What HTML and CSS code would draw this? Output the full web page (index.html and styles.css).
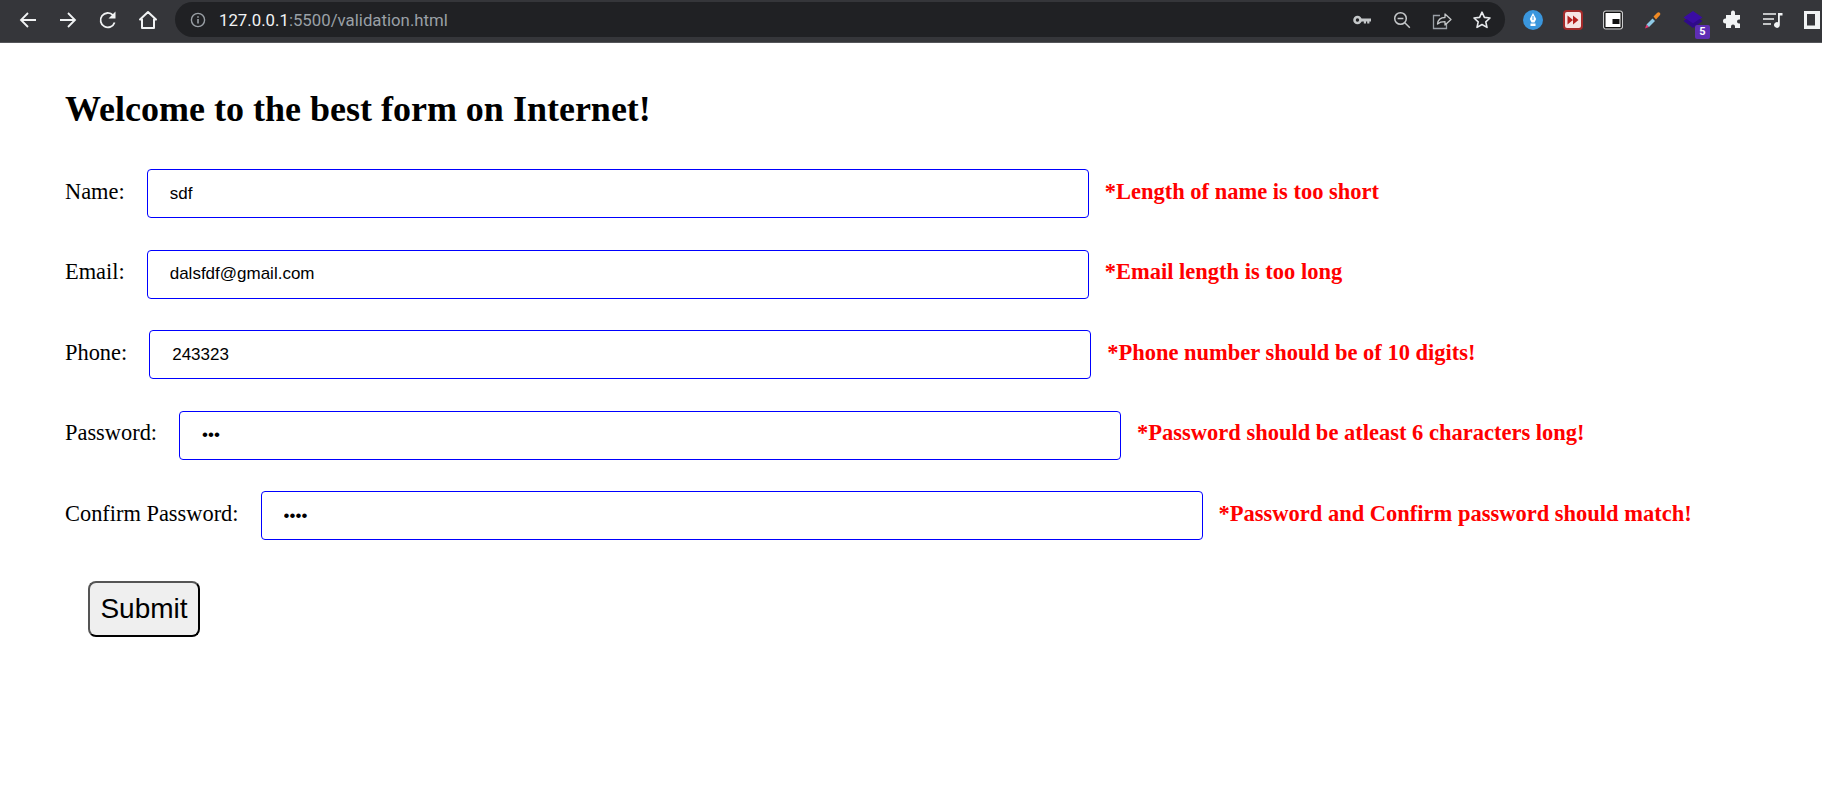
FILE: index.html
```html
<!DOCTYPE html>
<html lang="en">
<head>
  <meta charset="UTF-8">
  <title>Form Validation</title>
  <meta name="viewport" content="width=device-width, initial-scale=1">
  <link rel="stylesheet" href="styles.css">
</head>
<body>
  <div class="toolbar">
    <div class="nav-icons">
      <svg class="icon" viewBox="0 0 24 24"><path d="M20 12H5M12 5l-7 7 7 7" fill="none" stroke="#f1f3f4" stroke-width="1.8"/></svg>
      <svg class="icon" viewBox="0 0 24 24"><path d="M4 12h15M12 5l7 7-7 7" fill="none" stroke="#f1f3f4" stroke-width="1.8"/></svg>
      <svg class="icon" viewBox="0 0 24 24"><path d="M18.600 14.500A7.200 7.200 0 1 1 17 7.200" fill="none" stroke="#f1f3f4" stroke-width="1.800"/><path d="M19.500 3.500v7h-7z" fill="#f1f3f4"/></svg>
      <svg class="icon" viewBox="0 0 24 24"><path d="M12 4l8 7.500h-2V20H6v-8.500H4z" fill="none" stroke="#f1f3f4" stroke-width="2" stroke-linejoin="round"/></svg>
    </div>
    <div class="omnibox">
      <svg class="info-icon" viewBox="0 0 16 16"><circle cx="8" cy="8" r="6.600" fill="none" stroke="#9aa0a6" stroke-width="1.400"/><path d="M7.200 7h1.600v4.600H7.200zM7.200 4.200h1.600v1.600H7.200z" fill="#9aa0a6"/></svg>
      <span class="url"><span class="host">127.0.0.1</span>:5500/validation.html</span>
      <div class="omni-actions">
        <svg class="omni-icon" viewBox="0 0 20 20"><circle cx="5.500" cy="10" r="3" fill="none" stroke="#c4c7c9" stroke-width="2.600"/><path d="M8 8.600h11v2.800h-1.600v2h-2.200v-2h-1.200v2h-2.200v-2H8z" fill="#c4c7c9"/></svg>
        <svg class="omni-icon" viewBox="0 0 20 20"><circle cx="8.500" cy="8.500" r="5.800" fill="none" stroke="#c4c7c9" stroke-width="1.500"/><path d="M5.600 8.500h5.800M12.800 12.800l5 5" stroke="#c4c7c9" stroke-width="1.500"/></svg>
        <svg class="omni-icon" viewBox="0 0 20 20"><path d="M8 5.500H1.500v13h13V13" fill="none" stroke="#9aa0a6" stroke-width="1.300"/><path d="M5.500 14c.5-4.500 3.500-6.500 7.500-6.500V4l6 5.500-6 5.500v-3.300c-3.300 0-5.500.5-7.500 2.300z" fill="none" stroke="#c4c7c9" stroke-width="1.300" stroke-linejoin="round"/></svg>
        <svg class="omni-icon" viewBox="0 0 20 20"><path d="M10 2.200l2.400 5.200 5.600.6-4.200 3.800 1.200 5.600-5-2.900-5 2.900 1.200-5.600L2 8l5.600-.6z" fill="none" stroke="#e8eaed" stroke-width="1.600" stroke-linejoin="round"/></svg>
      </div>
    </div>
    <div class="extensions">
      <svg class="ext-icon" viewBox="0 0 20 20"><circle cx="10" cy="10" r="10" fill="#3a96dd"/><path d="M10 3l3.200 6-1.700 3.500h-3L6.800 9z" fill="#fff"/><rect x="7.500" y="13.500" width="5" height="2.500" fill="#fff"/><path d="M10 6v4" stroke="#3a96dd" stroke-width="1"/></svg>
      <svg class="ext-icon" viewBox="0 0 20 20"><rect x="1" y="1" width="18" height="18" rx="3" fill="#f6e4e4" stroke="#a32a2a" stroke-width="2"/><path d="M4.500 5.500l5.500 4.500-5.500 4.500zM10 5.500l5.500 4.500-5.500 4.500z" fill="#b3201f"/></svg>
      <svg class="ext-icon" viewBox="0 0 20 20"><rect x="0.500" y="1" width="19" height="18" rx="2" fill="#fff" stroke="#c9cacb" stroke-width="1"/><rect x="1.800" y="2.300" width="16.400" height="15.400" rx="1" fill="#fff" stroke="#111" stroke-width="1.400"/><rect x="9.500" y="9" width="7" height="5" fill="#111"/></svg>
      <svg class="ext-icon" viewBox="0 0 20 20"><path d="M2 18.500l1.500-4 2.500 2.500z" fill="#e8386f"/><path d="M3.500 14.500l6-6 2.500 2.500-6 6z" fill="#8ecae6"/><path d="M10.500 6.500l3.500-3.500c1-1 2-1 2.800-.2s.8 1.800-.2 2.800L13 9.500z" fill="#f08a24"/></svg>
      <div class="ext-badge-wrap">
        <svg class="ext-icon" viewBox="0 0 20 20"><path d="M10 1l9.500 6.500-9.500 6.500-9.500-6.500z" fill="#3a0ca3"/><path d="M.5 11l9.500 7 9.500-7-3-2-6.500 4.500-6.500-4.500z" fill="#2f0a8a"/></svg>
        <span class="ext-badge">5</span>
      </div>
      <svg class="ext-icon" viewBox="0 0 20 20"><path d="M8 2.500a2 2 0 0 1 4 0V5h5v4.500h-1a2 2 0 0 0 0 4h1V18h-5v-1.500a2 2 0 0 0-4 0V18H3v-4.500h-.5a2.500 2.500 0 0 1 0-5H3V5h5z" fill="#f1f3f4"/></svg>
      <svg class="ext-icon" viewBox="0 0 20 20"><path d="M0 4h13M0 9h11M0 14h8" stroke="#f1f3f4" stroke-width="1.600"/><path d="M15 3h4.500v2.500h-2.700V15a2.900 2.900 0 1 1-1.800-2.700z" fill="#f1f3f4"/></svg>
      <svg class="ext-icon" viewBox="0 0 20 20"><path d="M1 1h16v18H1zM4 4v11.500h8V4z" fill="#f1f3f4" fill-rule="evenodd"/></svg>
    </div>
  </div>

  <div class="page">
    <h1 class="title">Welcome to the best form on Internet!</h1>
    <form class="form">
      <div class="row">
        <label class="label" for="name">Name:</label>
        <input class="field" id="name" type="text" value="sdf">
        <span class="error">*Length of name is too short</span>
      </div>
      <div class="row">
        <label class="label" for="email">Email:</label>
        <input class="field" id="email" type="text" value="dalsfdf@gmail.com">
        <span class="error">*Email length is too long</span>
      </div>
      <div class="row">
        <label class="label" for="phone">Phone:</label>
        <input class="field" id="phone" type="text" value="243323">
        <span class="error">*Phone number should be of 10 digits!</span>
      </div>
      <div class="row">
        <label class="label" for="password">Password:</label>
        <input class="field" id="password" type="password" value="abc">
        <span class="error">*Password should be atleast 6 characters long!</span>
      </div>
      <div class="row">
        <label class="label" for="confirm">Confirm Password:</label>
        <input class="field" id="confirm" type="password" value="abcd">
        <span class="error">*Password and Confirm password should match!</span>
      </div>
      <button class="submit" type="button">Submit</button>
    </form>
  </div>
</body>
</html>
```

FILE: styles.css
```css
* {
  box-sizing: border-box;
}
html, body {
  height: 100%;
}
body {
  margin: 0;
  background: #fff;
  color: #000;
  font-family: "Liberation Serif", "Times New Roman", serif;
  overflow: hidden;
}

/* browser chrome */
.toolbar {
  display: flex;
  align-items: center;
  height: 43px;
  padding: 0 0 3px 16px;
  background: #35363a;
  border-bottom: 1px solid #55565a;
}
.nav-icons {
  display: flex;
  flex: none;
  gap: 16px;
  width: 159px;
}
.icon {
  width: 24px;
  height: 24px;
}
.omnibox {
  display: flex;
  flex: none;
  align-items: center;
  width: 1330px;
  height: 35px;
  padding: 0 13px 0 15px;
  background: #202124;
  border-radius: 18px;
}
.info-icon {
  width: 16px;
  height: 16px;
  margin-right: 13px;
}
.url {
  font: 16.8px "Roboto", "Liberation Sans", sans-serif;
  color: #9aa0a6;
}
.host {
  color: #f1f3f4;
}
.omni-actions {
  display: flex;
  gap: 20px;
  margin-left: auto;
}
.omni-icon {
  width: 20px;
  height: 20px;
}
.extensions {
  display: flex;
  flex: none;
  align-items: center;
  gap: 20px;
  margin-left: 18px;
}
.ext-icon {
  display: block;
  flex: none;
  width: 20px;
  height: 20px;
}
.ext-badge-wrap {
  position: relative;
}
.ext-badge {
  position: absolute;
  right: -7px;
  bottom: -9px;
  width: 15px;
  height: 14px;
  border-radius: 2px;
  background: #5f2eb5;
  color: #fff;
  font: bold 11px/14px "Roboto", sans-serif;
  text-align: center;
}

/* form page */
.page {
  padding: 0 65px;
}
.title {
  margin: 0;
  padding-top: 45px;
  font-size: 36px;
  line-height: 42px;
}
.form {
  margin-top: 39px;
}
.row {
  display: flex;
  align-items: center;
  height: 49px;
  margin-bottom: 31.5px;
}
.label {
  margin-right: 22px;
  padding-bottom: 4px;
  font-size: 22.4px;
  white-space: nowrap;
}
.field {
  flex: none;
  width: 942px;
  height: 49px;
  padding: 0 22px;
  border: 1px solid #00f;
  border-radius: 4px;
  font: 17px "Liberation Sans", Arial, sans-serif;
  color: #000;
  outline: none;
}
.error {
  margin-left: 16px;
  padding-bottom: 4px;
  color: #f00;
  font-size: 22.5px;
  font-weight: bold;
  white-space: nowrap;
}
.submit {
  display: block;
  width: 112px;
  height: 56px;
  margin: 41px 0 0 23px;
  padding: 0;
  background: #efefef;
  border: 2px solid #000;
  border-top-color: #555;
  border-left-color: #555;
  border-radius: 8px;
  font: 28px "Liberation Sans", Arial, sans-serif;
  color: #000;
}
```
